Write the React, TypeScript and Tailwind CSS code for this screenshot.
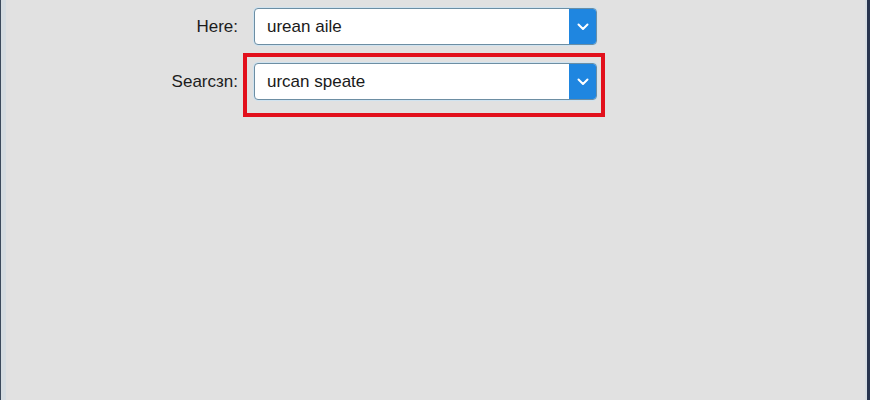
import React from "react";

function Chevron() {
  return (
    <svg width="12" height="8" viewBox="0 0 12 8" fill="none">
      <path d="M1.5 1.5 L6 6 L10.5 1.5" stroke="white" strokeWidth="2" strokeLinecap="round" strokeLinejoin="round" />
    </svg>
  );
}

function Select({ value }: { value: string }) {
  return (
    <div className="flex w-[343px] h-[37px] rounded-[4px] border border-[#6d8ea3] bg-white shadow-[0_0_0_1px_#cfe3f0] overflow-hidden">
      <div className="flex-1 flex items-center pl-[12px] text-[17px] text-[#1a1a1a]">{value}</div>
      <div className="w-[27px] bg-[#1f86e0] flex items-center justify-center">
        <Chevron />
      </div>
    </div>
  );
}

export default function App() {
  return (
    <div
      className="flex w-[870px] h-[400px] bg-[#e1e1e1]"
      style={{ fontFamily: '"Liberation Sans", Arial, sans-serif' }}
    >
      <div className="w-[1px] bg-[#3b4a5c]" />
      <div className="w-[5px] bg-[#d6dde2]" />
      <div className="flex-1 flex flex-col pt-[8px]">
        <div className="flex items-center">
          <div className="w-[232px] text-right text-[17px] text-[#1c1c1c]">Here:</div>
          <div className="ml-[16px]">
            <Select value="urean aile" />
          </div>
        </div>
        <div className="flex items-center mt-[8px]">
          <div className="w-[232px] text-right text-[17px] text-[#1c1c1c] pb-[6px]">Searcзn:</div>
          <div className="ml-[5px] border-[4px] border-[#e2101c] pl-[7px] pt-[6px] pr-[4px] pb-[13px]">
            <Select value="urcan speate" />
          </div>
        </div>
      </div>
      <div className="w-[2px] bg-[#d6dde2]" />
      <div className="w-[3px] bg-[#28344e]" />
    </div>
  );
}
